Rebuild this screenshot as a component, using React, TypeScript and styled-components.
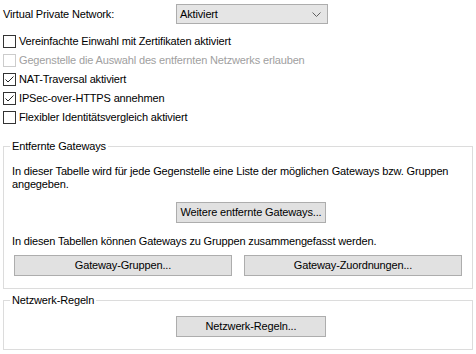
import React from "react";
import styled, { createGlobalStyle } from "styled-components";

const Global = createGlobalStyle`
  html, body { margin: 0; padding: 0; background: #ffffff; }
  body {
    font-family: "Liberation Sans", Arial, sans-serif;
    font-size: 11px;
    line-height: 13px;
    color: #000000;
    letter-spacing: -0.15px;
  }
`;

const Page = styled.div`
  width: 476px;
  height: 354px;
  box-sizing: border-box;
  padding: 4px 3px 0 3px;
  display: flex;
  flex-direction: column;
`;

const TopRow = styled.div`
  display: flex;
  align-items: center;
  height: 20px;
`;

const Label = styled.span`
  width: 173px;
  flex: none;
`;

const Select = styled.div`
  width: 152px;
  height: 20px;
  box-sizing: border-box;
  border: 1px solid #adadad;
  background: #e5e5e5;
  display: flex;
  align-items: center;
  justify-content: space-between;
  padding: 0 6px 0 3px;
`;

const CheckList = styled.div`
  margin-top: 11px;
  height: 89px;
  display: flex;
  flex-direction: column;
  gap: 6px;
`;

const CheckRow = styled.label<{ $disabled?: boolean }>`
  display: flex;
  align-items: center;
  height: 13px;
  gap: 3px;
  color: ${(p) => (p.$disabled ? "#a0a0a0" : "#000000")};
`;

const Box = styled.span<{ $disabled?: boolean }>`
  width: 13px;
  height: 13px;
  box-sizing: border-box;
  border: 1px solid ${(p) => (p.$disabled ? "#cccccc" : "#333333")};
  background: #ffffff;
  flex: none;
  display: block;
`;

const Group = styled.div<{ $height: number; $top: number; $padTop: number }>`
  position: relative;
  margin-top: ${(p) => p.$top}px;
  height: ${(p) => p.$height}px;
  box-sizing: border-box;
  border: 1px solid #dcdcdc;
  padding: ${(p) => p.$padTop}px 10px 0 10px;
  display: flex;
  flex-direction: column;
`;

const Legend = styled.span`
  position: absolute;
  top: -7px;
  left: 6px;
  padding: 0 2px;
  background: #ffffff;
`;

const Text = styled.p<{ $top?: number }>`
  margin: ${(p) => p.$top ?? 0}px 0 0 -2px;
`;

const Button = styled.button<{ $top?: number }>`
  font: inherit;
  letter-spacing: inherit;
  color: #000000;
  height: 21px;
  box-sizing: border-box;
  border: 1px solid #adadad;
  background: #e1e1e1;
  padding: 0;
  margin: ${(p) => p.$top ?? 0}px 0 0 0;
  display: flex;
  align-items: center;
  justify-content: center;
`;

const FixedButton = styled(Button)`
  width: 150px;
  margin-left: 162px;
  align-self: flex-start;
`;

const ButtonRow = styled.div`
  display: grid;
  grid-template-columns: 218px 218px;
  column-gap: 12px;
  margin-top: 7px;
`;

const Check = () => (
  <svg width="11" height="11" viewBox="0 0 11 11" style={{ display: "block" }}>
    <polyline points="1.5,5.5 4,8 9.5,2.5" fill="none" stroke="#222222" strokeWidth="1" />
  </svg>
);

const Chevron = () => (
  <svg width="9" height="5" viewBox="0 0 9 5" style={{ display: "block" }}>
    <polyline points="0.5,0.5 4.5,4.5 8.5,0.5" fill="none" stroke="#606060" strokeWidth="1" />
  </svg>
);

const items: { label: string; checked?: boolean; disabled?: boolean }[] = [
  { label: "Vereinfachte Einwahl mit Zertifikaten aktiviert" },
  { label: "Gegenstelle die Auswahl des entfernten Netzwerks erlauben", disabled: true },
  { label: "NAT-Traversal aktiviert", checked: true },
  { label: "IPSec-over-HTTPS annehmen", checked: true },
  { label: "Flexibler Identitätsvergleich aktiviert" },
];

export default function App() {
  return (
    <>
      <Global />
      <Page>
        <TopRow>
          <Label>Virtual Private Network:</Label>
          <Select>
            <span>Aktiviert</span>
            <Chevron />
          </Select>
        </TopRow>
        <CheckList>
          {items.map((it) => (
            <CheckRow key={it.label} $disabled={it.disabled}>
              <Box $disabled={it.disabled}>{it.checked ? <Check /> : null}</Box>
              <span>{it.label}</span>
            </CheckRow>
          ))}
        </CheckList>
        <Group $top={22} $height={143} $padTop={18}>
          <Legend>Entfernte Gateways</Legend>
          <Text>
            In dieser Tabelle wird für jede Gegenstelle eine Liste der möglichen Gateways bzw. Gruppen
            <br />
            angegeben.
          </Text>
          <FixedButton $top={11}>Weitere entfernte Gateways...</FixedButton>
          <Text $top={12}>In diesen Tabellen können Gateways zu Gruppen zusammengefasst werden.</Text>
          <ButtonRow>
            <Button>Gateway-Gruppen...</Button>
            <Button>Gateway-Zuordnungen...</Button>
          </ButtonRow>
        </Group>
        <Group $top={11} $height={50} $padTop={15}>
          <Legend>Netzwerk-Regeln</Legend>
          <FixedButton>Netzwerk-Regeln...</FixedButton>
        </Group>
      </Page>
    </>
  );
}
